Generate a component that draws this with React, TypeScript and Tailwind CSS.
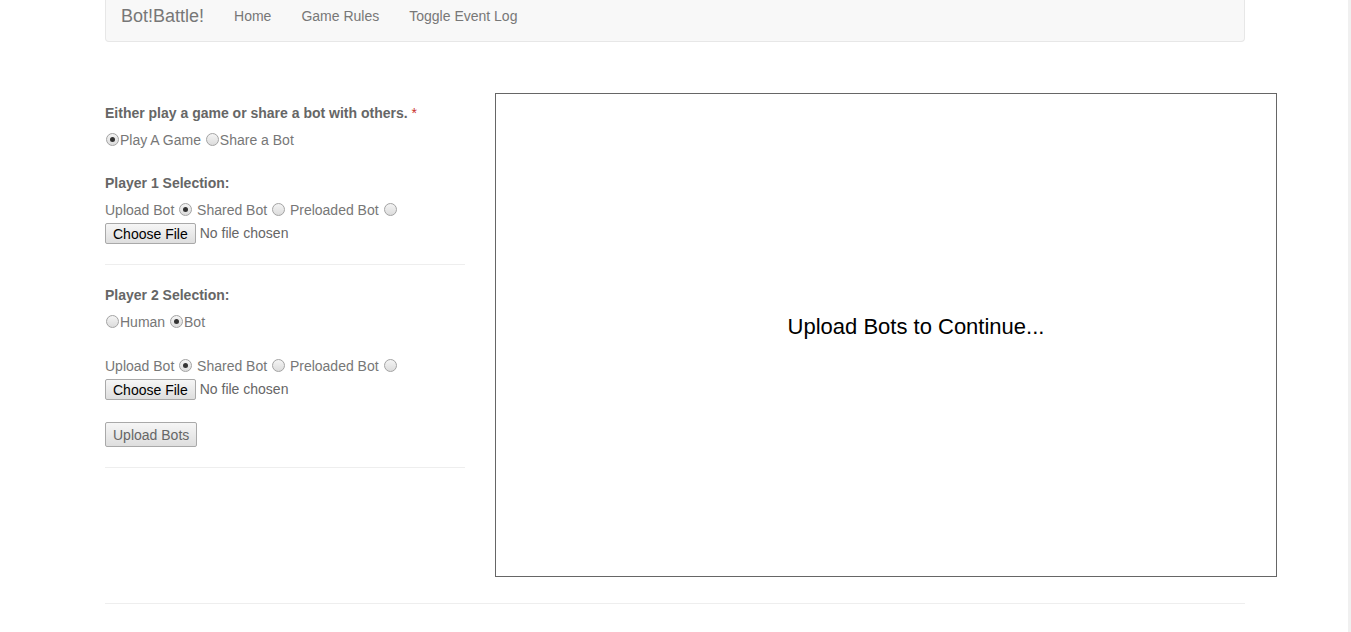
import React from "react";

function Radio({ checked = false }: { checked?: boolean }) {
  return (
    <span className="relative inline-block w-[13px] h-[13px] rounded-full border border-[#a3a3a3] bg-gradient-to-b from-[#f4f4f4] to-[#dcdcdc] align-[-1px] mx-[1px]">
      {checked && <span className="absolute left-[3px] top-[3px] block w-[5px] h-[5px] rounded-full bg-[#333]" />}
    </span>
  );
}

function FileInput() {
  return (
    <div className="flex items-center h-[21px] mt-[3px]">
      <button className="h-[21px] px-[7px] border border-[#a9a9a9] rounded-[2px] bg-gradient-to-b from-[#f6f6f6] to-[#dedede] text-[14px] text-black leading-none">
        Choose File
      </button>
      <span className="ml-[4px] text-[14px] text-[#666]">No file chosen</span>
    </div>
  );
}

function UploadRow({ className = "" }: { className?: string }) {
  return (
    <div className={"h-[20px] leading-[20px] text-[14px] text-[#777] " + className}>
      Upload Bot <Radio checked /> Shared Bot <Radio /> Preloaded Bot <Radio />
    </div>
  );
}

export default function App() {
  return (
    <div className="min-h-[632px] bg-white font-['Liberation_Sans',Arial,sans-serif] text-[14px] text-[#666] relative">
      <div className="absolute right-0 top-0 w-[3px] h-[632px] bg-[#f0f0f0]" />
      <div className="w-[1140px] ml-[105px]">
        <nav className="h-[42px] bg-[#f8f8f8] border border-t-0 border-[#e7e7e7] rounded-b-[4px] flex items-start">
          <span className="pl-[15px] pr-[15px] pt-[6px] text-[18px] leading-[20px] text-[#777]">Bot!Battle!</span>
          <span className="px-[15px] pt-[6px] leading-[20px] text-[#777]">Home</span>
          <span className="px-[15px] pt-[6px] leading-[20px] text-[#777]">Game Rules</span>
          <span className="px-[15px] pt-[6px] leading-[20px] text-[#777]">Toggle Event Log</span>
        </nav>
      </div>
      <div className="flex ml-[105px] mt-[51px]">
        <div className="w-[360px] pt-[10px]">
          <div className="h-[20px] leading-[20px] font-bold text-[#666]">
            Either play a game or share a bot with others. <span className="text-[#c9302c] font-normal">*</span>
          </div>
          <div className="mt-[7px] h-[20px] leading-[20px] text-[#777]">
            <Radio checked />Play A Game <Radio />Share a Bot
          </div>
          <div className="mt-[23px] h-[20px] leading-[20px] font-bold text-[#666]">Player 1 Selection:</div>
          <UploadRow className="mt-[7px]" />
          <FileInput />
          <div className="mt-[20px] h-px bg-[#eee]" />
          <div className="mt-[20px] h-[20px] leading-[20px] font-bold text-[#666]">Player 2 Selection:</div>
          <div className="mt-[7px] h-[20px] leading-[20px] text-[#777]">
            <Radio />Human <Radio checked />Bot
          </div>
          <UploadRow className="mt-[24px]" />
          <FileInput />
          <button className="mt-[22px] h-[25px] px-[7px] border border-[#a9a9a9] rounded-[2px] bg-gradient-to-b from-[#f6f6f6] to-[#dedede] text-[14px] text-[#666] leading-none">
            Upload Bots
          </button>
          <div className="mt-[20px] h-px bg-[#eee]" />
        </div>
        <div className="ml-[30px] w-[782px] h-[484px] border border-[#666] flex justify-center">
          <div className="pl-[60px] pt-[220px] text-[22px] leading-[26px] text-black">Upload Bots to Continue...</div>
        </div>
      </div>
      <div className="ml-[105px] w-[1140px] mt-[26px] h-px bg-[#eee]" />
    </div>
  );
}
